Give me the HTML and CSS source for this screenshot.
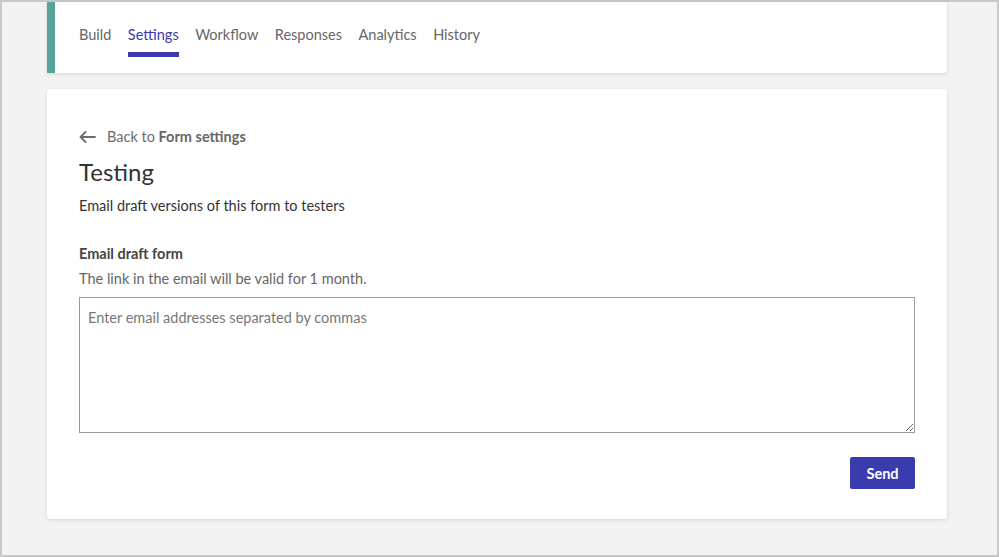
FILE: index.html
```html
<!DOCTYPE html>
<html lang="en">
<head>
    <meta charset="UTF-8">
    <title>Form settings - Testing</title>
    <link rel="stylesheet" href="styles.css">
</head>
<body>
    <div class="frame">
        <!-- Tabs -->
        <div class="tab-card">
            <nav class="tabs">
                <a class="tab" href="#">Build</a>
                <a class="tab active" href="#">Settings</a>
                <a class="tab" href="#">Workflow</a>
                <a class="tab" href="#">Responses</a>
                <a class="tab" href="#">Analytics</a>
                <a class="tab" href="#">History</a>
            </nav>
        </div>

        <!-- Testing section -->
        <div class="card">
            <a class="back-link" href="#">
                <svg width="17" height="12" viewBox="0 0 17 12" fill="none" stroke="#6b6b6b" stroke-width="1.8" stroke-linecap="round" stroke-linejoin="round">
                    <path d="M16 6H1.5M6.5 1L1.5 6l5 5"/>
                </svg>
                <span>Back to <b>Form settings</b></span>
            </a>
            <h1 class="title">Testing</h1>
            <p class="subtitle">Email draft versions of this form to testers</p>

            <div class="field">
                <label class="field-label" for="emails">Email draft form</label>
                <p class="field-hint">The link in the email will be valid for 1 month.</p>
                <textarea id="emails" placeholder="Enter email addresses separated by commas"></textarea>
            </div>

            <div class="actions">
                <button class="btn">Send</button>
            </div>
        </div>
    </div>
</body>
</html>
```

FILE: styles.css
```css
* {
    margin: 0;
    padding: 0;
    box-sizing: border-box;
    font-family: 'Lato', 'Noto Sans', sans-serif;
}

body {
    background-color: #f3f3f3;
}

.frame {
    height: 557px;
    border: 2px solid #c8c8c8;
    padding-left: 45px;
    background-color: #f3f3f3;
}

.tab-card {
    width: 900px;
    height: 71px;
    background-color: white;
    border-left: 8px solid #5aa39b;
    border-radius: 0 3px 3px 0;
    box-shadow: 0 1px 4px rgba(0,0,0,0.12);
    margin-bottom: 16px;
}

.tabs {
    display: flex;
    gap: 16.5px;
    padding-left: 24px;
    padding-top: 24px;
}

.tab {
    font-size: 14.5px;
    color: #666;
    text-decoration: none;
    padding-bottom: 9px;
    border-bottom: 5px solid transparent;
}

.tab.active {
    color: #3b3bb0;
    border-bottom-color: #3b3bb0;
}

.card {
    width: 900px;
    height: 430px;
    background-color: white;
    border-radius: 3px;
    box-shadow: 0 1px 4px rgba(0,0,0,0.12);
    padding: 39px 32px 0;
}

.back-link {
    display: flex;
    align-items: center;
    gap: 11px;
    font-size: 14.5px;
    color: #6b6b6b;
    text-decoration: none;
}

.back-link b {
    color: #666;
}

.title {
    font-size: 24px;
    font-weight: normal;
    color: #333;
    margin-top: 12px;
}

.subtitle {
    font-size: 14.5px;
    color: #333;
    margin-top: 11px;
}

.field {
    margin-top: 31px;
}

.field-label {
    display: block;
    font-size: 14.5px;
    font-weight: bold;
    color: #444;
}

.field-hint {
    font-size: 14.5px;
    color: #666;
    margin-top: 8px;
}

textarea {
    display: block;
    width: 100%;
    height: 136px;
    margin-top: 10px;
    padding: 11px 8px;
    border: 1px solid #999;
    border-radius: 0;
    font-size: 14.5px;
    color: #333;
    resize: vertical;
}

textarea::placeholder {
    color: #777;
}

.actions {
    display: flex;
    justify-content: flex-end;
    margin-top: 24px;
}

.btn {
    width: 65px;
    height: 32px;
    background-color: #3b3bb0;
    color: white;
    border: none;
    border-radius: 2px;
    font-size: 14.5px;
    font-weight: bold;
    cursor: pointer;
}
```
